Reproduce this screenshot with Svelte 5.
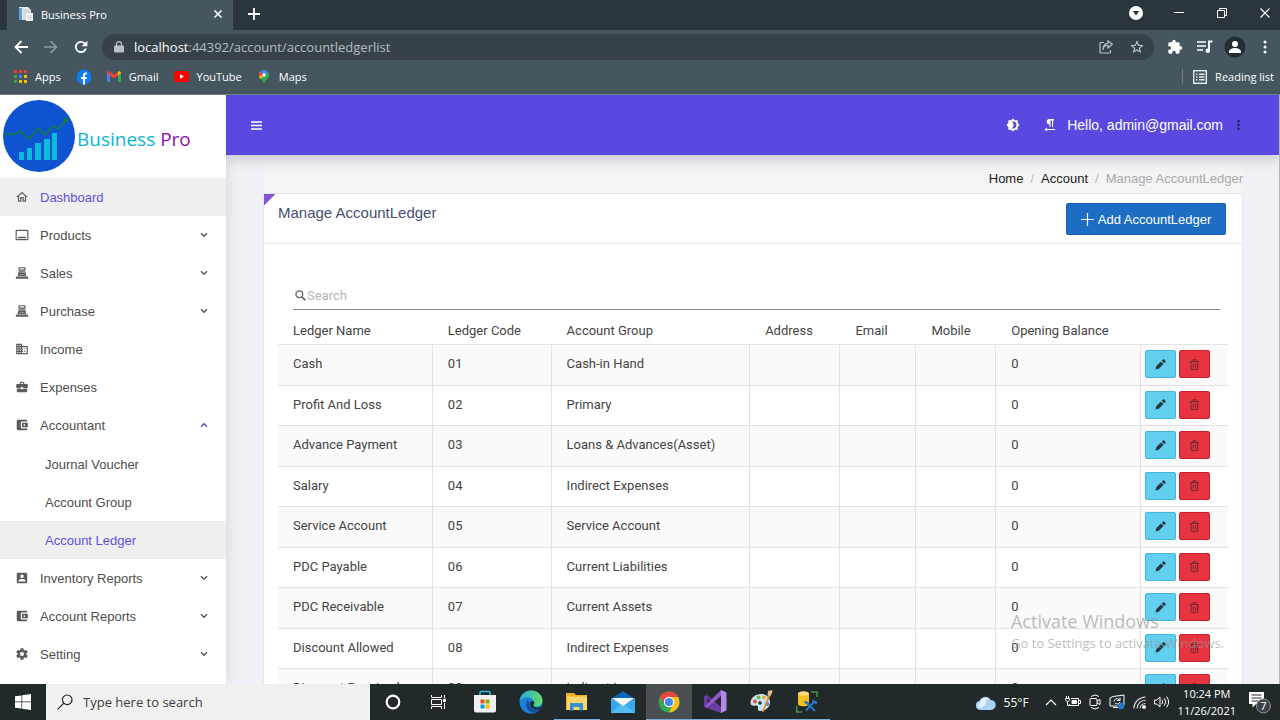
<script>
  const menu = [
    { label: 'Dashboard', icon: 'home', active: true },
    { label: 'Products', icon: 'products', more: true },
    { label: 'Sales', icon: 'pos', more: true },
    { label: 'Purchase', icon: 'pos', more: true },
    { label: 'Income', icon: 'domain' },
    { label: 'Expenses', icon: 'case' },
    {
      label: 'Accountant',
      icon: 'wallet',
      more: true,
      open: true,
      children: [
        { label: 'Journal Voucher' },
        { label: 'Account Group' },
        { label: 'Account Ledger', active: true },
      ],
    },
    { label: 'Inventory Reports', icon: 'contact', more: true },
    { label: 'Account Reports', icon: 'wallet', more: true },
    { label: 'Setting', icon: 'gear', more: true },
  ];

  const icons = {
    home: 'M12 5.7 17 10.2V18h-2v-6H9v6H7v-7.8zM12 3 2 12h3v8h6v-6h2v6h6v-8h3z',
    products: 'M21 3H3a2 2 0 0 0-2 2v14a2 2 0 0 0 2 2h18a2 2 0 0 0 2-2V5a2 2 0 0 0-2-2zm0 16H3V5h18zM5 15h14v2.500H5z',
    pos: 'M6 2h12v6H6zm2 2v2h8V4zM6.500 9h11l2 8h-15zm2 2v1.200h2V11zm3 0v1.200h2V11zm3 0v1.200h2V11zM8 13.500v1.200h2.200v-1.200zm3.200 0v1.200h2v-1.200zm3 0v1.200h2v-1.200zM1.500 18h21v4h-21z',
    domain: 'M12 7V3H2v18h20V7zM6 19H4v-2h2zm0-4H4v-2h2zm0-4H4V9h2zm0-4H4V5h2zm4 12H8v-2h2zm0-4H8v-2h2zm0-4H8V9h2zm0-4H8V5h2zm10 12h-8v-2h2v-2h-2v-2h2v-2h-2V9h8zm-2-8h-2v2h2zm0 4h-2v2h2z',
    case: 'M10 16v-1H3v4a2 2 0 0 0 2 2h14a2 2 0 0 0 2-2v-4h-7v1zm10-9h-4V5l-2-2h-4L8 5v2H4a2 2 0 0 0-2 2v3a2 2 0 0 0 2 2h6v-2h4v2h6a2 2 0 0 0 2-2V9a2 2 0 0 0-2-2zm-6 0h-4V5h4z',
    wallet: 'M21 18v1a2 2 0 0 1-2 2H5a2 2 0 0 1-2-2V5a2 2 0 0 1 2-2h14a2 2 0 0 1 2 2v1h-9a2 2 0 0 0-2 2v8a2 2 0 0 0 2 2zm-9-2h10V8H12zm4-2.500a1.500 1.500 0 1 1 0-3 1.500 1.500 0 0 1 0 3z',
    contact: 'M3 5v14a2 2 0 0 0 2 2h14a2 2 0 0 0 2-2V5a2 2 0 0 0-2-2H5a2 2 0 0 0-2 2zm12 4a3 3 0 1 1-6 0 3 3 0 0 1 6 0zm-9 8c0-2 4-3.100 6-3.100s6 1.100 6 3.100v1H6z',
    gear: 'M12 15.500A3.500 3.500 0 1 1 12 8.500a3.500 3.500 0 0 1 0 7zm7.430-2.530a7.800 7.800 0 0 0 0-1.940l2.110-1.630a.5.5 0 0 0 .12-.64l-2-3.460a.5.5 0 0 0-.61-.22l-2.490 1a7.300 7.300 0 0 0-1.690-.98l-.37-2.650A.5.5 0 0 0 14 2h-4a.5.5 0 0 0-.5.420l-.37 2.650c-.63.250-1.170.59-1.690.98l-2.490-1a.5.5 0 0 0-.61.22l-2 3.460a.5.5 0 0 0 .12.64l2.110 1.630a7.800 7.800 0 0 0 0 1.940l-2.110 1.690a.5.5 0 0 0-.12.64l2 3.460c.12.220.39.300.61.220l2.490-1.010c.52.400 1.060.74 1.690.99l.37 2.650c.04.240.25.420.5.420h4c.25 0 .46-.18.5-.42l.37-2.650c.63-.26 1.170-.59 1.690-.99l2.490 1.010c.22.080.49 0 .61-.22l2-3.460a.5.5 0 0 0-.12-.64z',
  };

  const rows = [
    ['Cash', '01', 'Cash-in Hand'],
    ['Profit And Loss', '02', 'Primary'],
    ['Advance Payment', '03', 'Loans & Advances(Asset)'],
    ['Salary', '04', 'Indirect Expenses'],
    ['Service Account', '05', 'Service Account'],
    ['PDC Payable', '06', 'Current Liabilities'],
    ['PDC Receivable', '07', 'Current Assets'],
    ['Discount Allowed', '08', 'Indirect Expenses'],
    ['Discount Received', '09', 'Indirect Income'],
  ];
  const heads = ['Ledger Name', 'Ledger Code', 'Account Group', 'Address', 'Email', 'Mobile', 'Opening Balance', ''];
  const appGrid = ['#ea4335', '#ea4335', '#ea4335', '#34a853', '#4285f4', '#fbbc05', '#34a853', '#fbbc05', '#fbbc05'];
  let query = $state('');
</script>

<div class="screen">
  <header class="browser">
    <div class="tabstrip">
      <div class="tab">
        <svg width="16" height="16" viewBox="0 0 16 16"><path d="M1 1h9l3 3v10H1z" fill="#e9eef2" /><path d="M1 2h3v12H1z" fill="#5aa2d6" /><path d="M5 3h7v11H5z" fill="#cfd9e0" /><path d="M8 7h7v8H8z" fill="#f4f6f8" /><path d="M9 10h5M9 12h5" stroke="#c3cdd2" /></svg>
        <span>Business Pro</span>
        <button class="ico close" aria-label="Close tab"><svg width="10" height="10" viewBox="0 0 10 10"><path d="M1.500 1.500l7 7M8.500 1.500l-7 7" stroke="#fff" stroke-width="1.500" /></svg></button>
      </div>
      <button class="ico plus" aria-label="New tab"><svg width="12" height="12" viewBox="0 0 12 12"><path d="M6 0v12M0 6h12" stroke="#fff" stroke-width="1.800" /></svg></button>
      <div class="winbtns">
        <button class="ico" aria-label="Search tabs"><svg width="14" height="14" viewBox="0 0 14 14"><circle cx="7" cy="7" r="7" fill="#fff" /><path d="M3.800 5h6.400L7 9.500z" fill="#2b353b" /></svg></button>
        <button class="ico" aria-label="Minimize"><svg width="10" height="10" viewBox="0 0 10 10"><path d="M0 4.500h10" stroke="#fff" /></svg></button>
        <button class="ico" aria-label="Restore"><svg width="10" height="10" viewBox="0 0 10 10" fill="none" stroke="#fff"><path d="M.5 2.500h7v7h-7zM2.500 2.500v-2h7v7h-2" /></svg></button>
        <button class="ico" aria-label="Close"><svg width="10" height="10" viewBox="0 0 10 10"><path d="M.5.5l9 9M9.500.5l-9 9" stroke="#fff" stroke-width="1.100" /></svg></button>
      </div>
    </div>

    <div class="toolbar">
      <button class="ico" aria-label="Back"><svg width="14" height="14" viewBox="0 0 14 14" fill="none" stroke="#fff" stroke-width="1.800"><path d="M14 7H1.500M7.500 1l-6 6 6 6" /></svg></button>
      <button class="ico" aria-label="Forward"><svg width="14" height="14" viewBox="0 0 14 14" fill="none" stroke="#8f9aa1" stroke-width="1.600"><path d="M0 7h12.500M6.500 1l6 6-6 6" /></svg></button>
      <button class="ico" aria-label="Reload"><svg width="18" height="18" viewBox="0 0 24 24"><path fill="#fff" d="M17.650 6.350A8 8 0 1 0 19.730 14h-2.600A5.600 5.600 0 1 1 12 6.200c1.600 0 3 .7 4 1.700L12.700 11H20.500V3.500z" /></svg></button>
      <label class="omnibox">
        <svg width="10" height="12" viewBox="0 0 10 12"><path d="M2.500 5V3.200a2.500 2.500 0 0 1 5 0V5" fill="none" stroke="#b9c0c4" stroke-width="1.300" /><rect y="4.500" width="10" height="7" rx="1" fill="#b9c0c4" /></svg>
        <span class="url"><b>localhost</b>:44392/account/accountledgerlist</span>
        <svg width="14" height="14" viewBox="0 0 14 14" fill="none" stroke="#b9c3c8" stroke-width="1.200"><path d="M5 2.500H2a1 1 0 0 0-1 1V12a1 1 0 0 0 1 1h8.500a1 1 0 0 0 1-1v-2" /><path d="M4 10c0-3.500 2-4.500 5-4.500V8l4.300-3.800L9 .800v2.500C5.500 3.500 4 6 4 10z" /></svg>
        <svg class="star" width="16" height="16" viewBox="0 0 24 24"><path fill="#c3ccd0" d="M22 9.240l-7.190-.62L12 2 9.190 8.630 2 9.240l5.460 4.730L5.820 21 12 17.270 18.180 21l-1.630-7.030zM12 15.400l-3.760 2.270 1-4.280-3.320-2.880 4.380-.38L12 6.100l1.710 4.040 4.380.38-3.320 2.880 1 4.280z" /></svg>
      </label>
      <button class="ico" aria-label="Extensions"><svg width="16" height="16" viewBox="0 0 24 24"><path fill="#fff" d="M20.500 11H19V7a2 2 0 0 0-2-2h-4V3.500a2.500 2.500 0 0 0-5 0V5H4a2 2 0 0 0-2 2v3.800h1.500a2.700 2.700 0 0 1 0 5.400H2V20a2 2 0 0 0 2 2h3.800v-1.500a2.700 2.700 0 0 1 5.400 0V22H17a2 2 0 0 0 2-2v-4h1.500a2.500 2.500 0 0 0 0-5z" /></svg></button>
      <button class="ico" aria-label="Media controls"><svg width="16" height="14" viewBox="0 0 16 14"><path d="M0 2h9M0 6h9M0 10h6" stroke="#fff" stroke-width="1.600" /><path d="M12 10.500V1.500h3.500" fill="none" stroke="#fff" stroke-width="1.800" /><circle cx="10.800" cy="10.800" r="2.200" fill="#fff" /></svg></button>
      <button class="ico" aria-label="Profile"><svg width="22" height="22" viewBox="0 0 22 22"><circle cx="11" cy="11" r="10.500" fill="#252d32" /><circle cx="11" cy="8" r="3" fill="#fff" /><path d="M5 17v-1.500c0-2 3.500-3.500 6-3.500s6 1.500 6 3.500V17z" fill="#fff" /></svg></button>
      <button class="ico" aria-label="Menu"><svg width="4" height="14" viewBox="0 0 4 14" fill="#fff"><circle cx="2" cy="2" r="1.500" /><circle cx="2" cy="7" r="1.500" /><circle cx="2" cy="12" r="1.500" /></svg></button>
    </div>

    <nav class="bookmarks">
      <a href="#apps"><svg width="13" height="13" viewBox="0 0 13 13">{#each appGrid as c, i}<rect x={(i % 3) * 5} y={Math.floor(i / 3) * 5} width="3" height="3" fill={c} />{/each}</svg>Apps</a>
      <a href="#facebook" aria-label="Facebook"><svg width="16" height="16" viewBox="0 0 16 16"><circle cx="8" cy="8" r="7.500" fill="#0f7cf5" /><path d="M7 15.500V10H5V8h2V6.400C7 4.400 8.200 3.500 9.700 3.500c.7 0 1.300.1 1.300.1v1.700H10c-.8 0-1 .5-1 1V8h2l-.4 2H9v5.500z" fill="#fff" /></svg></a>
      <a href="#gmail"><svg width="14" height="11" viewBox="0 0 14 11"><path d="M0 2h3v9H1a1 1 0 0 1-1-1z" fill="#4285f4" /><path d="M11 2h3v8a1 1 0 0 1-1 1h-2z" fill="#34a853" /><path d="M0 2C0 .3 1.800-.3 3 .7l4 3.100 4-3.100V4.500L7 7.600 0 2.300z" fill="#ea4335" /><path d="M11 .7c1.200-1 3-.4 3 1.300l-3 2.500z" fill="#fbbc04" /></svg>Gmail</a>
      <a href="#youtube"><svg width="15" height="11" viewBox="0 0 15 11"><rect width="15" height="11" rx="2.500" fill="#f00" /><path d="M6 3.200v4.600l4-2.300z" fill="#fff" /></svg>YouTube</a>
      <a href="#maps"><svg width="14" height="14" viewBox="0 0 14 14"><path d="M7 0a5 5 0 0 1 5 5c0 4-4 4.500-5 9-1-4.500-5-5-5-9a5 5 0 0 1 5-5z" fill="#34a853" /><path d="M2 5a5 5 0 0 1 1.200-3.200L7 5 3.500 9.300C2.600 8 2 7 2 5z" fill="#fbbc04" /><path d="M3.200 1.800L7 5 2.200 6C1.800 4.200 2.200 3 3.200 1.800z" fill="#ea4335" /><path d="M3.200 1.800a5 5 0 0 1 8.200 1L7 5z" fill="#4285f4" /><circle cx="7" cy="5" r="1.700" fill="#fff" /></svg>Maps</a>
      <a href="#reading" class="reading"><svg width="14" height="14" viewBox="0 0 14 14" fill="none" stroke="#e6eaec" stroke-width="1.400"><rect x=".7" y=".7" width="12.600" height="12.600" /><path d="M3 4.200h1.500M3 7h1.500M3 9.800h1.500M6 4.200h5.500M6 7h5.500M6 9.800h5.500" /></svg>Reading list</a>
    </nav>
  </header>

  <div class="page">
    <aside>
      <div class="brand">
        <svg width="72" height="72" viewBox="0 0 72 72"><circle cx="36" cy="36" r="36" fill="#0e53cf" /><g fill="#0bbcdb"><path d="M16 52h5v8h-5zM24 48h5v12h-5zM32 43h6v17h-6zM41 39h6v21h-6zM49 33h5v27h-5z" /></g><path d="M1 36l4-3 6 2 6-4 9 8 9-11 7 7 8-9 5 3 9-9" fill="none" stroke="#138526" stroke-width="1.300" /><path d="M60 20l6-3-2 6z" fill="#138526" /></svg>
        <span class="name">Business <em>Pro</em></span>
      </div>
      <nav>
        {#each menu as item}
          <a href="#{item.label}" class="item" class:active={item.active}>
            <svg class="mi" width="14" height="14" viewBox="0 0 24 24"><path fill-rule="evenodd" d={icons[item.icon]} /></svg>
            <span>{item.label}</span>
            {#if item.more}
              <svg class="chev" class:open={item.open} width="8" height="6" viewBox="0 0 8 6"><path d="M1 1.200l3 3 3-3" /></svg>
            {/if}
          </a>
          {#if item.children}
            <div class="sub">
              {#each item.children as child}
                <a href="#{child.label}" class="item" class:active={child.active}>{child.label}</a>
              {/each}
            </div>
          {/if}
        {/each}
      </nav>
    </aside>

    <div class="main">
      <div class="appbar">
        <button class="ico" aria-label="Toggle menu"><svg width="11" height="9" viewBox="0 0 11 9"><path d="M0 1h11M0 4.500h11M0 8h11" stroke="#fff" stroke-width="1.400" /></svg></button>
        <button class="ico theme" aria-label="Theme"><svg width="14" height="14" viewBox="0 0 24 24"><path fill="#fff" fill-rule="evenodd" d="M20 15.310L23.310 12 20 8.690V4h-4.690L12 .69 8.690 4H4v4.690L.69 12 4 15.310V20h4.690L12 23.310 15.310 20H20zM12 18c-.9 0-1.700-.2-2.500-.55C11.560 16.500 13 14.420 13 12s-1.440-4.500-3.500-5.450A6 6 0 1 1 12 18z" /></svg></button>
        <button class="ico para" aria-label="Text direction"><svg width="12" height="13" viewBox="0 0 12 13"><path fill="#fff" d="M10 0v1.500H9V8H8V1.500H6.500V8h-1V5.500a2.700 2.700 0 0 1 0-5.500zM3 8.500V10h8v1H3v1.500L.5 10.500z" /></svg></button>
        <span class="hello">Hello, admin@gmail.com</span>
        <button class="ico more" aria-label="More"><svg width="3" height="10" viewBox="0 0 3 10" fill="#24205c"><circle cx="1.500" cy="1.300" r="1.200" /><circle cx="1.500" cy="5" r="1.200" /><circle cx="1.500" cy="8.700" r="1.200" /></svg></button>
      </div>

      <div class="content">
        <nav class="crumbs"><a href="#home">Home</a><i>/</i><a href="#account">Account</a><i>/</i><span>Manage AccountLedger</span></nav>
        <section class="card">
          <div class="cardhead">
            <h1>Manage AccountLedger</h1>
            <button class="add"><svg width="13" height="13" viewBox="0 0 13 13"><path d="M6.500 0v13M0 6.500h13" stroke="#fff" stroke-width="1.200" /></svg>Add AccountLedger</button>
          </div>
          <div class="cardbody">
            <label class="search">
              <svg width="11" height="11" viewBox="0 0 11 11" fill="none" stroke="#666"><circle cx="4.300" cy="4.300" r="3.400" stroke-width="1.300" /><path d="M6.800 6.800l3.600 3.600" stroke-width="1.700" /></svg>
              <input type="text" placeholder="Search" aria-label="Search" bind:value={query} />
            </label>
            <table>
              <colgroup><col class="c1" /><col class="c2" /><col class="c3" /><col class="c4" /><col class="c5" /><col class="c6" /><col class="c7" /><col class="c8" /></colgroup>
              <thead><tr>{#each heads as h}<th>{h}</th>{/each}</tr></thead>
              <tbody>
                {#each rows as r}
                  <tr>
                    <td>{r[0]}</td><td>{r[1]}</td><td>{r[2]}</td><td></td><td></td><td></td><td>0</td>
                    <td class="acts"><div>
                      <button class="edit" aria-label="Edit {r[0]}"><svg width="11" height="11" viewBox="0 0 11 11"><path fill="#24373f" d="M.500 10.500l.700-3.200L6 2.500 8.500 5l-4.800 4.800zM6.700 1.800l1-1c.6-.6 1.200-.6 1.800 0l.7.7c.6.600.6 1.200 0 1.800l-1 1z" /></svg></button>
                      <button class="del" aria-label="Delete {r[0]}"><svg width="9" height="11" viewBox="0 0 9 11" fill="none" stroke="#702a2f"><path d="M0 2.500h9M3 2V.7h3V2M1.200 2.500v7.800h6.600V2.500M3.300 4.500v4M5.700 4.500v4" /></svg></button>
                    </div></td>
                  </tr>
                {/each}
              </tbody>
            </table>
          </div>
        </section>
      </div>
    </div>
    <div class="watermark"><strong>Activate Windows</strong><span>Go to Settings to activate Windows.</span></div>
  </div>

  <footer class="taskbar">
    <button class="start" aria-label="Start"><svg width="16" height="16" viewBox="0 0 16 16" fill="#fff"><path d="M0 2.300l6.500-.9v6.200H0zM7.200 1.300L16 0v7.600H7.200zM0 8.300h6.500v6.300L0 13.700zM7.200 8.300H16V16l-8.800-1.300z" /></svg></button>
    <label class="tsearch">
      <svg width="16" height="16" viewBox="0 0 16 16" fill="none" stroke="#222" stroke-width="1.200"><circle cx="10.200" cy="5.800" r="4.800" /><path d="M6.800 9.200L.6 15.400" /></svg>
      <input type="text" placeholder="Type here to search" aria-label="Type here to search" />
    </label>
    <div class="apps">
      <button aria-label="Cortana"><svg width="16" height="16" viewBox="0 0 16 16"><circle cx="8" cy="8" r="6.300" fill="none" stroke="#fff" stroke-width="2.200" /></svg></button>
      <button aria-label="Task view"><svg width="16" height="16" viewBox="0 0 16 16" fill="none" stroke="#fff"><path d="M.5 1v2.500h10V1M.5 15v-2.500h10V15M.5 5.500h10v5H.5zM13.500 1v3.500M13.500 9v6" /><path d="M12.500 5.500h2v2h-2z" fill="#fff" /></svg></button>
      <button aria-label="Store"><svg width="24" height="24" viewBox="0 0 24 24"><path d="M7 6V2.500C7 1.700 7.500 1.500 8 1.500h8c.6 0 1 .3 1 1V6" fill="none" stroke="#2db7e8" stroke-width="1.600" /><path d="M1 5h22v15.500a2 2 0 0 1-2 2H3a2 2 0 0 1-2-2z" fill="#f1f1f1" /><path d="M7.500 9.500h4v4h-4z" fill="#f04e23" /><path d="M12.500 9.500h4v4h-4z" fill="#7ab800" /><path d="M7.500 14.500h4v4h-4z" fill="#00a1e9" /><path d="M12.500 14.500h4v4h-4z" fill="#fcb900" /></svg></button>
      <button aria-label="Edge"><svg width="24" height="24" viewBox="0 0 24 24"><defs><linearGradient id="edge-top" x1="0" x2="1"><stop offset="0" stop-color="#2aa9e6" /><stop offset="1" stop-color="#62dc60" /></linearGradient></defs><circle cx="12" cy="12" r="11.500" fill="#1b7fd3" /><path d="M.6 11C1.500 5 6 .5 12 .5c7 0 11.500 5 11.500 10 0 4-3 6-6.300 6-2.700 0-4-1-3.200-2.300 2-3-.5-7-5-7-4 0-7 1.800-8.400 3.800z" fill="url(#edge-top)" /><path d="M9 10c-4 4-1.500 11 5 12.800 3.500-.5 6-2 7.800-4.600-4 2-9.500.8-11-2.700C10 13.500 10.300 11.500 9 10z" fill="#124f9f" /><path d="M15 14c-1.500 1.800 0 3.500 4 3.500 1.500 0 3-.5 3.700-1.200l-1.500 2.600c-4 1.300-9-.2-10-3.700-.8-3 1-4.500 2.500-4.200 1.600.4 2.300 1.500 1.300 3z" fill="#202a2d" /></svg></button>
      <button class="run" aria-label="File Explorer"><svg width="22" height="18" viewBox="0 0 22 18"><path d="M0 0h8l2 2h11v15H0z" fill="#f0ae28" /><path d="M1 3.500h20V17H1z" fill="#fbd566" /><path d="M4 10h13v7.500h-3.500V14h-6v3.500H4z" fill="#3492dc" /></svg></button>
      <button aria-label="Mail"><svg width="24" height="22" viewBox="0 0 24 22"><path d="M0 8l12-8 12 8v14H0z" fill="#0b67b8" /><path d="M0 7.500h24V22H0z" fill="#37a9ea" /><path d="M0 22L12 12l12 10z" fill="#55bdf2" /><path d="M1 7h22l-11 8z" fill="#f4f8fb" /></svg></button>
      <button class="run current" aria-label="Chrome"><svg width="22" height="22" viewBox="0 0 22 22"><circle cx="11" cy="11" r="10.500" fill="#34a853" /><path d="M11 11L1.900 5.800A10.500 10.500 0 0 1 20.200 6z" fill="#e2483b" /><path d="M11 6h9.200A10.500 10.500 0 0 1 11 21.500L15.500 13z" fill="#fbc116" /><path d="M2 5.600L6.500 13.500 11 6z" fill="#e2483b" /><circle cx="11" cy="11" r="5.200" fill="#fff" /><circle cx="11" cy="11" r="4.100" fill="#4285f4" /></svg></button>
      <button class="run" aria-label="Visual Studio"><svg width="23" height="23" viewBox="0 0 23 23"><path d="M0 6.500l3-1.500 14 12V23L.8 17.200 0 16z" fill="#6b3ca3" /><path d="M3.500 8v7L7 11.500z" fill="#23262a" /><path d="M.5 16.500l2.500 1.200L17 6V0L3 14z" fill="#9259cd" /><path d="M17 0l5.500 2.500v18L17 23z" fill="#b488e9" /></svg></button>
      <button class="run" aria-label="Paint"><svg width="23" height="23" viewBox="0 0 23 23"><path d="M11 4c6 0 9 4 9 8 0 5-4 9-10 9-2 0-2.500-1.500-2-3 .6-2-1-2.700-3-2.300C2 16 .5 15 .5 13 .5 8 5 4 11 4z" fill="#c8e3f1" /><circle cx="5" cy="11.500" r="2" fill="#ed5144" /><circle cx="8.500" cy="7.500" r="2" fill="#70b84a" /><circle cx="14" cy="7.500" r="1.900" fill="#e7ac30" /><circle cx="10" cy="13" r="1.800" fill="#26343a" /><circle cx="17" cy="14" r="2" fill="#4e78c5" /><path d="M12 22L18.500 5l2 .7L13.500 22z" fill="#e28a2e" /><path d="M17.500 5.500L18 1l4.500-1-.5 3-1.500 3z" fill="#dfbb8d" /></svg></button>
      <button class="run" aria-label="SQL Server"><svg width="22" height="22" viewBox="0 0 22 22"><path d="M2 2v11c0 3 11 3 11 0V2z" fill="#f5bf20" /><ellipse cx="7.500" cy="2.500" rx="5.500" ry="2.200" fill="#ffd980" /><path d="M15 1h6v5M.8 15v6H6" fill="none" stroke="#3c9442" stroke-width="1.600" /><path d="M10 11l9 9M19 10l-9 9.500" stroke="#2478c9" stroke-width="2" /><path d="M8.500 10.500l3.500 2M16.500 9.500l4.500 3" stroke="#2478c9" stroke-width="2.400" /></svg></button>
    </div>
    <div class="tray">
      <svg width="21" height="15" viewBox="0 0 21 15"><path d="M5 15a4.500 4.500 0 0 1-.5-8.900A6 6 0 0 1 15.500 5 5 5 0 0 1 16 15z" fill="#a9d3f5" /><path d="M5 13a3 3 0 0 1 0-5.500A5.500 5.500 0 0 1 14 4c-3 .5-4 3-3 5-2 0-2 4-6 4z" fill="#e3f2fd" /></svg>
      <span class="temp">55°F</span>
      <svg width="12" height="8" viewBox="0 0 12 8"><path d="M1 7l5-5 5 5" fill="none" stroke="#fff" stroke-width="1.200" /></svg>
      <svg width="16" height="12" viewBox="0 0 16 12" fill="none" stroke="#fff"><path d="M6 2.500h7.500v7H4.500V8M14 4.500h1.500v3H14" /><path d="M7 4.500h4.500v3H7z" fill="#fff" /><path d="M1.500 0v2M3.500 0v2M.5 2.500h4c0 2-.7 3-2 3s-2-1-2-3zM2.500 6v3.500H5" /></svg>
      <svg width="12" height="16" viewBox="0 0 12 16" fill="none" stroke="#fff"><rect x="1" y="4.500" width="7" height="7" rx="1" /><path d="M8 7l3-1.500v5L8 9M2 2.500q4-3 8 0M2 13.500q4 3 8 0" /></svg>
      <svg width="16" height="16" viewBox="0 0 16 16" fill="none" stroke="#fff"><path d="M1 4l3-1.500L15 1v10H9M1 4v8h7M4 13.500h5M5 7.500a3 3 0 0 1 5-2l1 1M11 3.500v3H8M11 8a3 3 0 0 1-5 1" /><circle cx="12" cy="12" r="3" fill="#2a76c6" stroke="#2a76c6" /></svg>
      <svg width="13" height="13" viewBox="0 0 13 13" fill="none" stroke="#ddd" stroke-width="1.100"><path d="M.8 12.500A12 12 0 0 1 12.500 1M4 12.500A8.500 8.500 0 0 1 12.500 4.300M7 12.500a5.500 5.500 0 0 1 5.500-5" /><circle cx="11" cy="11" r="1.500" fill="#fff" /></svg>
      <svg width="16" height="14" viewBox="0 0 16 14" fill="none" stroke="#fff"><path d="M.5 5h2.300L6 2v10L2.800 9H.5zM8 5q1.500 2 0 4M10.300 3.300q3 3.700 0 7.400M12.600 1.600q4 5.400 0 10.800" /></svg>
      <div class="clock"><span>10:24 PM</span><span>11/26/2021</span></div>
      <button class="notes" aria-label="Notifications"><svg width="24" height="24" viewBox="0 0 24 24"><path d="M1 2h15v12h-8l-3.500 3.500V14H1z" fill="#fff" /><path d="M3.500 5h10M3.500 8h10M3.500 11h7" stroke="#222b2e" /><circle cx="15.500" cy="16" r="7" fill="#3b4347" stroke="#8d9497" /><text x="15.500" y="20" text-anchor="middle" fill="#fff" font-size="11" font-family="Open Sans, sans-serif">7</text></svg></button>
    </div>
  </footer>
</div>

<style>
  :global(body) { margin: 0; }
  .screen { height: 100vh; display: flex; flex-direction: column; overflow: hidden; font-family: 'Liberation Sans', Arial, sans-serif; font-size: 13px; color: #444; }
  .screen * { box-sizing: border-box; }
  a { color: inherit; text-decoration: none; }
  button { border: 0; padding: 0; background: none; font: inherit; color: inherit; }
  svg { flex: none; display: block; }
  .ico { display: flex; align-items: center; justify-content: center; width: 30px; height: 30px; flex: none; }

  .browser { flex: none; background: #45565f; color: #fff; font-family: 'Open Sans', 'Noto Sans', sans-serif; font-size: 13px; border-bottom: 1px solid #71808a; }
  .tabstrip { height: 30px; display: flex; background: #2b363c; }
  .tab { width: 226px; margin-left: 7px; padding: 0 0 2px 11px; display: flex; align-items: center; gap: 7px; background: #45565f; font-size: 11px; }
  .tab .close { margin-left: auto; }
  .plus { margin-left: 6px; height: 28px; }
  .winbtns { margin-left: auto; display: flex; gap: 13px; height: 25px; align-items: center; }
  .toolbar { height: 34px; padding-left: 6px; display: flex; align-items: center; }
  .omnibox { flex: 1; margin: 0 6px; height: 26px; border-radius: 13px; background: #374248; display: flex; align-items: center; padding: 0 9px 0 12px; gap: 10px; }
  .url { flex: 1; color: #b4bdc2; }
  .url b { font-weight: 400; color: #fff; }
  .star { margin-left: 6px; }
  .bookmarks { height: 30px; display: flex; align-items: center; gap: 15px; padding: 0 6px 5px 14px; font-size: 11px; }
  .bookmarks a { display: flex; align-items: center; gap: 8px; }
  .bookmarks .reading { margin-left: auto; border-left: 1px solid #6f7e86; padding-left: 10px; }

  .page { flex: 1; min-height: 0; display: flex; position: relative; overflow: hidden; background: #f0f1f6; border-right: 1px solid #b4b6bc; }
  aside { width: 226px; flex: none; background: #fff; box-shadow: 0 0 12px rgba(60, 60, 90, 0.16); z-index: 2; }
  .brand { height: 83px; padding: 5px 3px; display: flex; gap: 2px; }
  .name { font-family: 'Open Sans', 'Noto Sans', sans-serif; font-size: 19px; line-height: 78px; white-space: nowrap; color: #0bb4d0; }
  .name em { font-style: normal; color: #8e0fb0; }
  .item { height: 38px; display: flex; align-items: center; padding: 0 18px 0 15px; color: #4d4d4d; }
  .item span { margin-left: 11px; }
  .mi { fill: #5c5c5c; }
  .chev { margin-left: auto; fill: none; stroke: #555; stroke-width: 1.4; }
  .chev.open { transform: rotate(180deg); stroke: #5948e0; }
  .sub { padding: 1px 0 0; }
  .sub .item { padding-left: 45px; }
  .item.active { background: #efefef; color: #5f4fe0; }

  .main { flex: 1; min-width: 0; }
  .appbar { height: 60px; background: #5a49e1; color: #fff; display: flex; align-items: center; padding: 0 26px 0 15px; box-shadow: 0 2px 14px rgba(40, 40, 60, 0.28); position: relative; z-index: 1; }
  .theme { margin-left: auto; }
  .para { margin-left: 7px; }
  .hello { margin-left: 2px; font-size: 14px; }
  .more { width: 30px; }
  .content { padding: 11px 36px 0 37px; }
  .crumbs { height: 27px; display: flex; justify-content: flex-end; align-items: center; padding-bottom: 3px; background: #f4f4f5; color: #222; }
  .crumbs i { font-style: normal; color: #bbb; padding: 0 7px; }
  .crumbs span { color: #a9a9ad; }
  .card { background: #fff; border: 1px solid #e4e6ee; border-radius: 3px; }
  .cardhead { height: 50px; display: flex; justify-content: space-between; align-items: flex-start; padding: 9px 16px 0 14px; border-bottom: 1px solid #e6e7ea; background: linear-gradient(135deg, #8456d3 8px, transparent 8px); }
  h1 { margin: 0; font-size: 15px; font-weight: 400; line-height: 20px; color: #454f70; }
  .add { height: 32px; width: 160px; display: flex; align-items: center; justify-content: center; gap: 4px; background: #1c6dc3; border: 1px solid #1861b4; border-radius: 2px; color: #fff; font-size: 13px; }
  .cardbody { padding: 37px 14px 0 14px; }
  .search { margin: 0 8px 0 15px; height: 29px; border-bottom: 1px solid #888; display: flex; align-items: center; padding-left: 2px; gap: 1px; }
  input { border: 0; outline: 0; padding: 0; background: none; flex: 1; min-width: 0; font: inherit; color: inherit; }
  .search input::placeholder { color: #b5b5b5; opacity: 1; }
  .search, table { font-family: Roboto, 'Liberation Sans', sans-serif; font-size: 13px; }
  table { width: 100%; table-layout: fixed; border-collapse: separate; border-spacing: 0; color: #444; }
  .c1 { width: 16.3%; } .c2 { width: 12.5%; } .c3 { width: 20.9%; } .c4 { width: 9.500%; }
  .c5 { width: 8%; } .c6 { width: 8.400%; } .c7 { width: 15.200%; } .c8 { width: 9.200%; }
  th { height: 35px; padding: 6px 0 0 15px; font-weight: 400; text-align: left; white-space: nowrap; border-bottom: 1px solid #e4e4e4; }
  td { height: 41px; padding: 0 0 3px 15px; white-space: nowrap; border-bottom: 1px solid #e2e2e2; border-right: 1px solid #e2e2e2; }
  tr:nth-child(even) td { height: 40px; }
  tr:nth-child(odd) td { background: #fafafa; }
  td.acts { padding: 0 0 2px 4px; border-right: 0; }
  .acts div { display: flex; gap: 3px; }
  .acts button { width: 31px; height: 28px; border-radius: 2px; display: flex; align-items: center; justify-content: center; }
  .edit { background: #62cff1; border: 1px solid #42b6dc; }
  .del { background: #e63440; border: 1px solid #c71f2d; }

  .watermark { position: absolute; right: 55px; bottom: 31px; z-index: 3; display: flex; flex-direction: column; pointer-events: none; color: rgba(150, 150, 150, 0.65); font-family: 'Open Sans', 'Noto Sans', sans-serif; font-size: 13px; line-height: 20px; }
  .watermark strong { font-weight: 400; font-size: 18px; line-height: 23px; }

  .taskbar { height: 36px; flex: none; display: flex; background: #22292b; color: #fff; font-family: 'Open Sans', 'Noto Sans', sans-serif; }
  .start { width: 46px; display: flex; align-items: center; justify-content: center; }
  .tsearch { width: 324px; background: #f0f0f0; display: flex; align-items: center; gap: 10px; padding: 0 11px; font-size: 13px; }
  .tsearch input::placeholder { color: #3c3c3c; opacity: 1; }
  .apps { display: flex; }
  .apps button { width: 46px; display: flex; align-items: center; justify-content: center; border-bottom: 1px solid transparent; }
  .apps .run { border-color: #76aede; }
  .apps .current { background: #4b4f51; }
  .tray { margin-left: auto; display: flex; align-items: center; gap: 8px; padding-right: 8px; font-size: 12px; }
  .temp { margin: 0 8px 0 0; }
  .clock { display: flex; flex-direction: column; align-items: center; line-height: 17px; font-size: 11px; }
  .notes { margin-left: 4px; }
</style>
